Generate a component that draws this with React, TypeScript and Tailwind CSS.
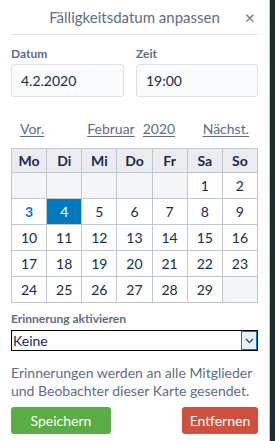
import React from "react";

// Kalenderdaten für Februar 2020 (Woche beginnt Montag)
const weekdays = ["Mo", "Di", "Mi", "Do", "Fr", "Sa", "So"];

const weeks: (number | null)[][] = [
  [null, null, null, null, null, 1, 2],
  [3, 4, 5, 6, 7, 8, 9],
  [10, 11, 12, 13, 14, 15, 16],
  [17, 18, 19, 20, 21, 22, 23],
  [24, 25, 26, 27, 28, 29, null],
];

const TODAY = 3;
const SELECTED = 4;

function DayCell({ day }: { day: number | null }) {
  if (day === null) {
    return <td className="h-[26px] border border-[#c1c7d0] bg-[#f4f5f7]" />;
  }
  if (day === SELECTED) {
    return (
      <td className="h-[26px] border border-[#c1c7d0] bg-[#0079bf] text-center text-white">
        {day}
      </td>
    );
  }
  return (
    <td
      className={
        day === TODAY
          ? "h-[26px] border border-[#c1c7d0] bg-white text-center font-bold text-[#0079bf]"
          : "h-[26px] border border-[#c1c7d0] bg-white text-center text-[#172b4d]"
      }
    >
      {day}
    </td>
  );
}

export default function App() {
  return (
    <div className="flex h-[441px] w-[275px] bg-[#1d2b2e] font-['Lato',sans-serif]">
      <div className="h-full w-[270px] border-r border-[#c1c7d0] bg-white px-[11px]">
        {/* Kopfzeile */}
        <header className="relative flex h-[35px] items-center justify-center border-b border-[#dfe1e6] text-[15px] text-[#5e6c84]">
          <span>Fälligkeitsdatum anpassen</span>
          <button className="absolute right-[3px] top-[8px] text-[18px] leading-none text-[#6b778c]">×</button>
        </header>

        {/* Datum & Zeit */}
        <div className="mt-[9px] flex gap-3">
          <label className="flex w-[113px] flex-col">
            <span className="text-[12px] font-bold leading-[20px] text-[#5e6c84]">Datum</span>
            <span className="flex h-[33px] items-center rounded-[3px] border border-[#dfe1e6] bg-[#fafbfc] px-[9px] text-[14px] text-[#172b4d]">
              4.2.2020
            </span>
          </label>
          <label className="flex flex-1 flex-col">
            <span className="text-[12px] font-bold leading-[20px] text-[#5e6c84]">Zeit</span>
            <span className="flex h-[33px] items-center rounded-[3px] border border-[#dfe1e6] bg-[#fafbfc] px-[9px] text-[14px] text-[#172b4d]">
              19:00
            </span>
          </label>
        </div>

        {/* Monatsnavigation */}
        <nav className="mt-[21px] flex items-center px-[9px] text-[14px] text-[#5e6c84]">
          <a className="underline underline-offset-2">Vor.</a>
          <div className="ml-[43px] flex gap-[8px]">
            <a className="underline underline-offset-2">Februar</a>
            <a className="underline underline-offset-2">2020</a>
          </div>
          <a className="ml-auto underline underline-offset-2">Nächst.</a>
        </nav>

        {/* Kalender */}
        <table className="mt-[9px] w-full table-fixed border-collapse text-[14px]">
          <thead>
            <tr>
              {weekdays.map((d) => (
                <th
                  key={d}
                  className="h-[24px] border border-[#c1c7d0] bg-[#ebecf0] text-center font-bold text-[#172b4d]"
                >
                  {d}
                </th>
              ))}
            </tr>
          </thead>
          <tbody>
            {weeks.map((week, i) => (
              <tr key={i}>
                {week.map((day, j) => (
                  <DayCell key={j} day={day} />
                ))}
              </tr>
            ))}
          </tbody>
        </table>

        {/* Erinnerung */}
        <div className="mt-[8px] text-[12px] font-bold leading-[16px] text-[#5e6c84]">Erinnerung aktivieren</div>
        <div className="mt-[3px] flex h-[21px] items-stretch border border-black bg-white text-[14px] text-[#172b4d]">
          <span className="flex flex-1 items-center pl-[1px]">Keine</span>
          <span className="flex w-[16px] items-center justify-center border border-[#0078d7] bg-[#e5f1fb]">
            <svg width="9" height="6" viewBox="0 0 9 6" fill="none" stroke="#333" strokeWidth="1.2">
              <path d="M1 1l3.5 3.5L8 1" />
            </svg>
          </span>
        </div>

        <p className="mt-[13px] text-[14px] leading-[18px] text-[#5e6c84]">
          Erinnerungen werden an alle Mitglieder und Beobachter dieser Karte gesendet.
        </p>

        {/* Aktionen */}
        <div className="mt-[7px] flex justify-between">
          <button className="h-[27px] w-[100px] rounded-[3px] bg-[#5aac44] text-[14px] text-white">Speichern</button>
          <button className="h-[27px] w-[76px] rounded-[3px] bg-[#cf513d] text-[14px] text-white">Entfernen</button>
        </div>
      </div>
    </div>
  );
}
